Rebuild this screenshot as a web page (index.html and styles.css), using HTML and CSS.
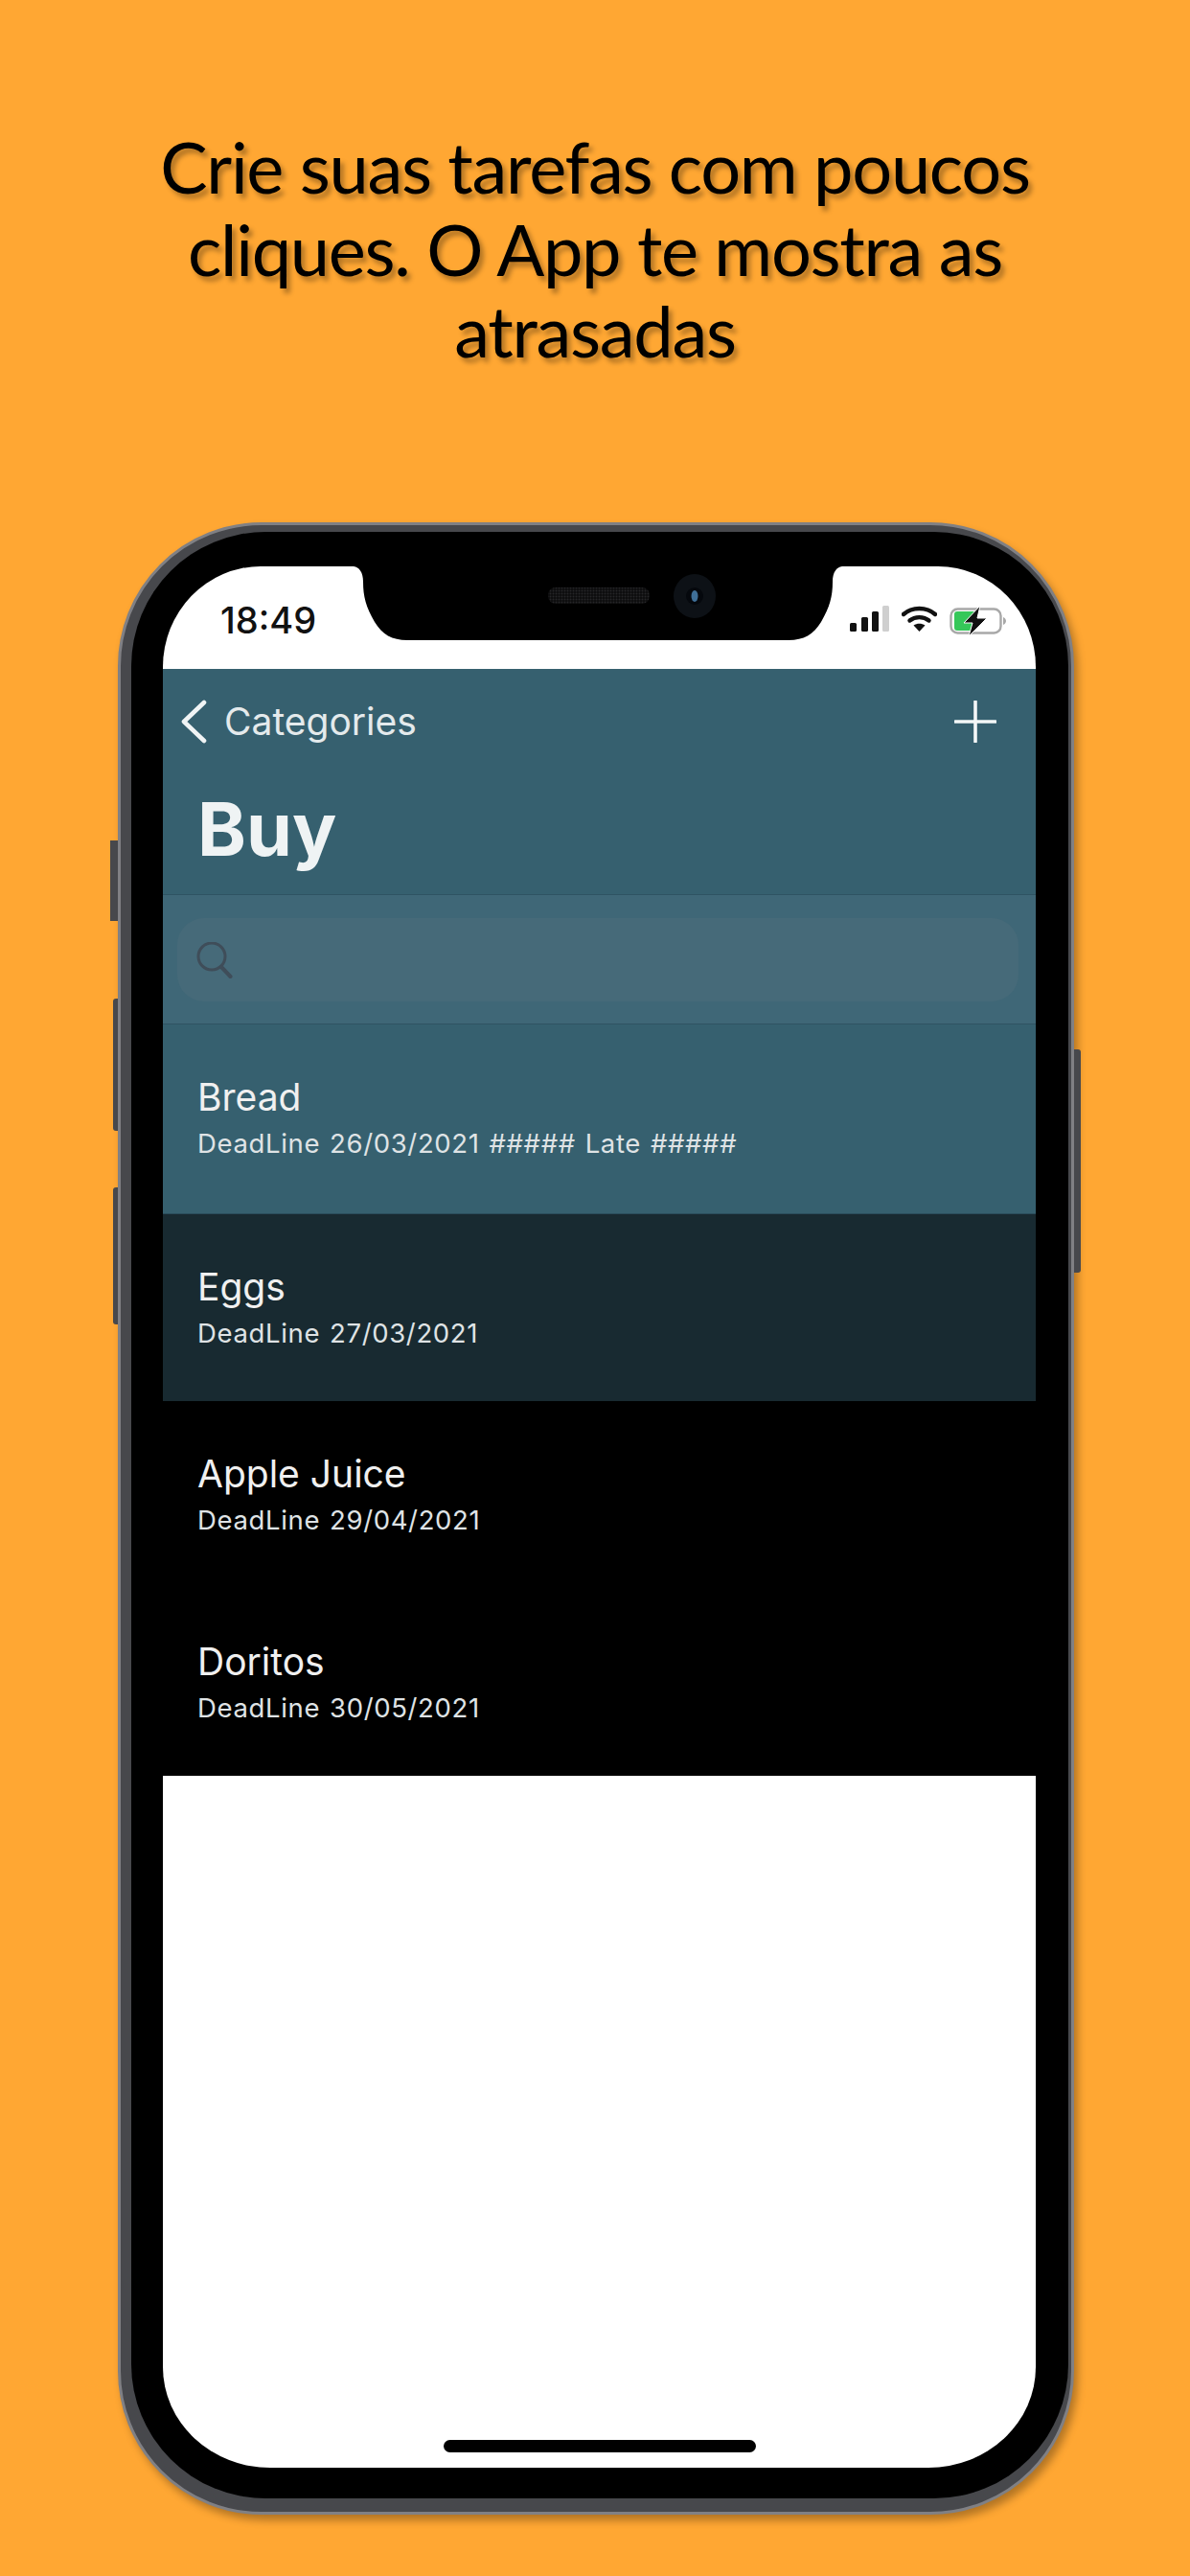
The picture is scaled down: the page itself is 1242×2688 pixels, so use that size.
FILE: index.html
```html
<!DOCTYPE html>
<html lang="en">
<head>
  <meta charset="UTF-8" />
  <title>Buy</title>
  <link rel="stylesheet" href="styles.css">
</head>
<body>
  <h1 class="headline">Crie suas tarefas com poucos<br>cliques. O App te mostra as<br>atrasadas</h1>

  <div class="phone">
    <span class="side-btn mute"></span>
    <span class="side-btn vol-up"></span>
    <span class="side-btn vol-down"></span>
    <span class="side-btn power"></span>

    <div class="bezel">
      <div class="screen">
        <svg class="notch" viewBox="0 0 510 77" width="510" height="77">
          <defs>
            <pattern id="grille" width="3" height="3" patternUnits="userSpaceOnUse">
              <rect width="3" height="3" fill="#0b0b0c"/>
              <circle cx="1.500" cy="1.500" r="1" fill="#262628"/>
            </pattern>
          </defs>
          <path d="M0 0H510C504 1 500 6 500 16C500 32 497 42 488 58C480 71 470 77 454 77H56C40 77 30 71 22 58C13 42 10 32 10 16C10 6 6 1 0 0Z" fill="#000"/>
          <rect x="203" y="22" width="106" height="17" rx="8" fill="url(#grille)"/>
          <ellipse cx="356" cy="31" rx="22" ry="23" fill="#0d1116"/>
          <circle cx="356" cy="31" r="9" fill="#05080d"/>
          <ellipse cx="356" cy="31" rx="3.500" ry="6" fill="#3f6f98"/>
        </svg>

        <div class="status">
          <span class="time">18:49</span>
          <div class="status-icons">
            <svg width="41" height="27" viewBox="0 0 41 27">
              <rect x="0" y="18" width="7" height="9" rx="1.5" fill="#111"/>
              <rect x="12" y="12" width="7" height="15" rx="1.5" fill="#111"/>
              <rect x="23" y="6" width="7" height="21" rx="1.5" fill="#111"/>
              <rect x="34" y="0" width="7" height="27" rx="1.5" fill="#cfcfcf"/>
            </svg>
            <svg width="37" height="27" viewBox="0 0 37 27" fill="none">
              <path d="M2 9C11 1 26 1 35 9" stroke="#111" stroke-width="4.4" stroke-linecap="round"/>
              <path d="M8.5 15.5C14 11 23 11 28.5 15.5" stroke="#111" stroke-width="4.4" stroke-linecap="round"/>
              <path d="M12.5 20.5C16 18 21 18 24.5 20.5L18.5 27Z" fill="#111"/>
            </svg>
            <svg width="60" height="32" viewBox="0 0 60 32" fill="none">
              <rect x="1.5" y="3.5" width="52" height="25" rx="7" stroke="#a8a8a8" stroke-width="2.4"/>
              <path d="M5 9a3 3 0 0 1 3-3h20l-9 11h6v9H8a3 3 0 0 1-3-3Z" fill="#35c759"/>
              <path d="M56 12c2 1 3 2.500 3 4s-1 3-3 4Z" fill="#a8a8a8"/>
              <path d="M32 0L15 18h9l-4 14L39 13h-10Z" fill="#111" stroke="#fff" stroke-width="1"/>
            </svg>
          </div>
        </div>

        <header class="nav">
          <div class="nav-row">
            <a class="back">
              <svg width="28" height="46" viewBox="0 0 28 46" fill="none">
                <path d="M25 3L4 23L25 43" stroke="#f0f4f5" stroke-width="4.600" stroke-linecap="round" stroke-linejoin="round"/>
              </svg>
              <span>Categories</span>
            </a>
            <svg class="add" width="44" height="44" viewBox="0 0 44 44" fill="none">
              <path d="M22 1V43M1 22H43" stroke="#f4f7f8" stroke-width="3.600" stroke-linecap="round"/>
            </svg>
          </div>
          <h2 class="title">Buy</h2>
        </header>

        <div class="search-strip">
          <div class="search-box">
            <svg width="40" height="38" viewBox="0 0 40 38" fill="none">
              <circle cx="16" cy="15" r="14" stroke="#3f4d59" stroke-width="3"/>
              <path d="M26 26L35.500 36" stroke="#3f4d59" stroke-width="4" stroke-linecap="round"/>
            </svg>
          </div>
        </div>

        <ul class="tasks">
          <li class="task late">
            <div class="task-name">Bread</div>
            <div class="task-date">DeadLine 26/03/2021 ##### Late #####</div>
          </li>
          <li class="task soon">
            <div class="task-name">Eggs</div>
            <div class="task-date">DeadLine 27/03/2021</div>
          </li>
          <li class="task">
            <div class="task-name">Apple Juice</div>
            <div class="task-date">DeadLine 29/04/2021</div>
          </li>
          <li class="task">
            <div class="task-name">Doritos</div>
            <div class="task-date">DeadLine 30/05/2021</div>
          </li>
        </ul>

        <div class="home-bar"></div>
      </div>
    </div>
  </div>
</body>
</html>
```

FILE: styles.css
```css
* {
  box-sizing: border-box;
  margin: 0;
  padding: 0;
}

body {
  width: 1242px;
  height: 2688px;
  overflow: hidden;
  background: #ffa733;
  font-family: 'Inter', 'Liberation Sans', sans-serif;
}

.headline {
  height: 545px;
  padding-top: 131px;
  text-align: center;
  font-family: 'Lato', sans-serif;
  font-size: 74px;
  font-weight: 400;
  letter-spacing: -1.3px;
  line-height: 85.5px;
  color: #000;
  text-shadow: 4px 5px 5px rgba(0, 0, 0, 0.3);
}

.phone {
  position: relative;
  width: 998px;
  height: 2079px;
  margin-left: 123px;
  padding: 7px 3px 14px 11px;
  border-radius: 150px;
  background: #47484c;
  border: 3px solid #808084;
  box-shadow: 4px 6px 8px rgba(0, 0, 0, 0.3);
}

.side-btn {
  position: absolute;
  background: #47484c;
}

.mute {
  left: -11px;
  top: 329px;
  width: 8px;
  height: 84px;
}

.vol-up {
  left: -8px;
  top: 494px;
  width: 5px;
  height: 138px;
  border-radius: 3px 0 0 3px;
}

.vol-down {
  left: -8px;
  top: 691px;
  width: 5px;
  height: 143px;
  border-radius: 3px 0 0 3px;
}

.power {
  right: -10px;
  top: 547px;
  width: 7px;
  height: 233px;
  border-radius: 0 3px 3px 0;
}

.bezel {
  height: 100%;
  padding: 36px 34px 32px 33px;
  border-radius: 140px;
  background: #000;
}

.screen {
  position: relative;
  display: flex;
  flex-direction: column;
  height: 100%;
  overflow: hidden;
  border-radius: 102px 102px 112px 112px / 105px 105px 105px 105px;
  background: #fff;
}

.notch {
  position: absolute;
  left: 199px;
  top: 0;
}

.status {
  display: flex;
  justify-content: space-between;
  height: 107px;
  padding: 37px 30px 0 60px;
}

.time {
  font-size: 38px;
  font-weight: 500;
  line-height: 38px;
  color: #111;
}

.status-icons {
  display: flex;
  align-items: flex-start;
  gap: 13px;
  padding-top: 4px;
}

.nav {
  height: 235px;
  background: #36606f;
}

.nav-row {
  display: flex;
  justify-content: space-between;
  align-items: center;
  padding: 31px 41px 0 18px;
}

.back {
  display: flex;
  align-items: center;
  gap: 18px;
  font-size: 39px;
  color: #e4eaec;
}

.title {
  padding: 44px 0 0 36px;
  font-size: 77px;
  font-weight: 700;
  line-height: 90px;
  color: #eff3f4;
}

.search-strip {
  height: 136px;
  padding: 24px 18px 23px 15px;
  background: #3f6777;
  border-top: 1px solid #2f5362;
  border-bottom: 1px solid #2f5362;
}

.search-box {
  display: flex;
  align-items: center;
  height: 100%;
  padding-left: 20px;
  border-radius: 28px;
  background: #466a79;
}

.tasks {
  list-style: none;
  background: #000;
}

.task {
  height: 195.500px;
  padding: 53px 0 0 36px;
  color: #f0f0f0;
}

.task.late {
  height: 197.500px;
  background: #36606f;
  border-bottom: 1px solid #2a4d5b;
}

.task.soon {
  background: #182a31;
}

.task-name {
  font-size: 39px;
  line-height: 46px;
}

.task-date {
  margin-top: 8px;
  font-size: 27.500px;
  letter-spacing: 0.65px;
  word-spacing: 1.5px;
  line-height: 34px;
  color: #dfe3e5;
}

.home-bar {
  width: 326px;
  height: 13px;
  margin: auto auto 16px 293px;
  border-radius: 7px;
  background: #000;
}
```
